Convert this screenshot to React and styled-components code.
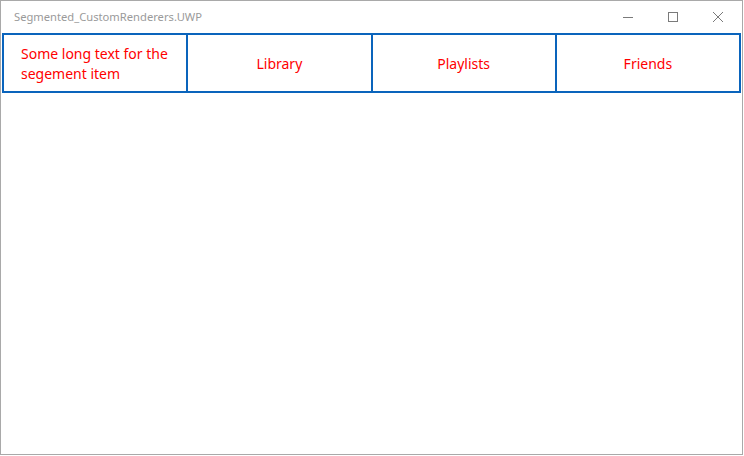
import React from 'react'
import styled, { createGlobalStyle } from 'styled-components'

const GlobalStyle = createGlobalStyle`
  html, body {
    margin: 0;
    padding: 0;
    background: #fff;
  }
`

const Window = styled.div`
  box-sizing: border-box;
  width: 743px;
  height: 455px;
  border: 1px solid #a9a9a9;
  background: #fff;
  display: flex;
  flex-direction: column;
  font-family: "Noto Sans", "Open Sans", sans-serif;
`

const TitleBar = styled.div`
  height: 32px;
  display: flex;
  align-items: center;
  padding: 0 2px 0 13px;
`

const Title = styled.div`
  flex: 1;
  font-size: 11.2px;
  color: #9a9a9a;
  margin-top: -1px;
`

const Caption = styled.button`
  width: 45px;
  height: 32px;
  border: 0;
  background: transparent;
  padding: 0;
  display: flex;
  align-items: center;
  justify-content: center;
  color: #7a7a7a;
`

const Segmented = styled.div`
  display: flex;
  height: 60px;
  margin: 0 1px;
  border: 2px solid #0a64bc;
  box-sizing: border-box;
`

const Segment = styled.div`
  flex: 1;
  display: flex;
  align-items: center;
  justify-content: center;
  padding: 2px 17px 0;
  border-left: ${p => (p.first ? '0' : '2px solid #0a64bc')};
`

const Label = styled.span`
  color: #ff0000;
  font-size: 14px;
  line-height: 20px;
  text-align: left;
`

const Content = styled.div`
  flex: 1;
`

const items = ['Some long text for the segement item', 'Library', 'Playlists', 'Friends']

export default function App() {
  return (
    <>
      <GlobalStyle />
      <Window>
        <TitleBar>
          <Title>Segmented_CustomRenderers.UWP</Title>
          <Caption aria-label="minimize">
            <svg width="10" height="10" viewBox="0 0 10 10">
              <path d="M0 5.5h10" stroke="currentColor" strokeWidth="1" />
            </svg>
          </Caption>
          <Caption aria-label="maximize">
            <svg width="10" height="10" viewBox="0 0 10 10">
              <rect x="0.5" y="0.5" width="9" height="9" fill="none" stroke="currentColor" strokeWidth="1" />
            </svg>
          </Caption>
          <Caption aria-label="close">
            <svg width="10" height="10" viewBox="0 0 10 10">
              <path d="M0 0L10 10M10 0L0 10" stroke="currentColor" strokeWidth="1" />
            </svg>
          </Caption>
        </TitleBar>
        <Segmented>
          {items.map((t, i) => (
            <Segment key={t} first={i === 0}>
              <Label>{t}</Label>
            </Segment>
          ))}
        </Segmented>
        <Content />
      </Window>
    </>
  )
}
